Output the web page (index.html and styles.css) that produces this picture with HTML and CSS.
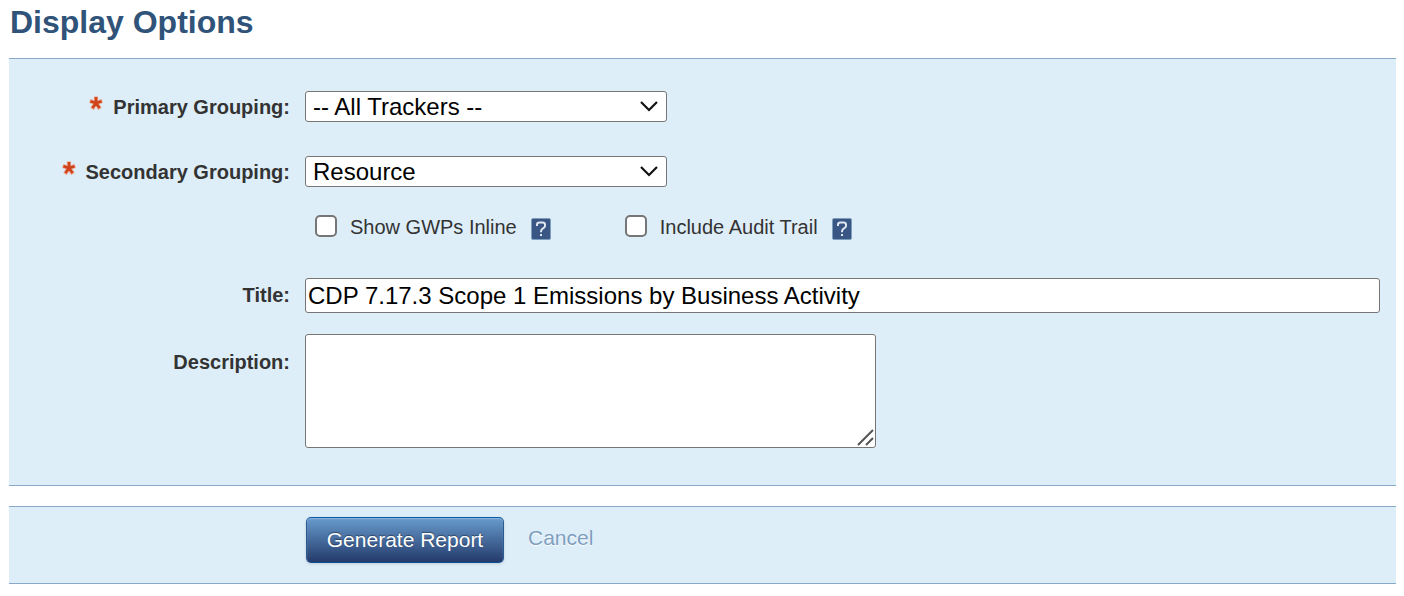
FILE: index.html
```html
<!DOCTYPE html>
<html lang="en">
<head>
    <meta charset="UTF-8">
    <meta name="viewport" content="width=device-width, initial-scale=1.0">
    <title>Display Options</title>
    <link rel="stylesheet" href="styles.css">
</head>
<body>

    <svg width="0" height="0" class="defs">
        <symbol id="star" viewBox="0 0 14 14">
            <path d="M7 7V0.500M7 7L0.800 5M7 7l6.200-2M7 7l-4 6M7 7l4 6" fill="none" stroke="#eba592" stroke-width="4.200"/>
            <path d="M7 7V1M7 7L1.400 5.200M7 7l5.600-1.800M7 7l-3.600 5M7 7l3.600 5" fill="none" stroke="#d0441c" stroke-width="2.600"/>
        </symbol>
        <symbol id="chevron" viewBox="0 0 18 12">
            <path d="M1 2l8 8 8-8" fill="none" stroke="#111" stroke-width="2.200"/>
        </symbol>
        <symbol id="help" viewBox="0 0 20 22">
            <rect x="0.500" y="0.500" width="19" height="21" rx="1.500" fill="#3a5685" stroke="#7d9dbd"/>
            <path d="M6 8V6.500Q6 4.500 8.500 4.500H11.500Q14 4.500 14 6.600V8Q14 9.300 12 10.300Q10 11.500 10 13.500V14.300" fill="none" stroke="#dfe7f1" stroke-width="2"/>
            <rect x="9" y="16" width="2" height="2" fill="#dfe7f1"/>
        </symbol>
    </svg>

    <h1>Display Options</h1>

    <form>
        <div class="panel options">
            <div class="row">
                <label for="primary"><svg class="star"><use href="#star"/></svg>Primary Grouping:</label>
                <div class="select">
                    <select id="primary"><option>-- All Trackers --</option></select>
                    <svg class="chevron"><use href="#chevron"/></svg>
                </div>
            </div>

            <div class="row">
                <label for="secondary"><svg class="star"><use href="#star"/></svg>Secondary Grouping:</label>
                <div class="select">
                    <select id="secondary"><option>Resource</option></select>
                    <svg class="chevron"><use href="#chevron"/></svg>
                </div>
            </div>

            <div class="checks">
                <div class="check">
                    <input type="checkbox" id="gwps">
                    <label for="gwps">Show GWPs Inline</label>
                    <svg class="help"><use href="#help"/></svg>
                </div>
                <div class="check">
                    <input type="checkbox" id="audit">
                    <label for="audit">Include Audit Trail</label>
                    <svg class="help"><use href="#help"/></svg>
                </div>
            </div>

            <div class="row title-row">
                <label for="title">Title:</label>
                <input type="text" id="title" value="CDP 7.17.3 Scope 1 Emissions by Business Activity">
            </div>

            <div class="row description-row">
                <label for="description">Description:</label>
                <div class="description">
                    <textarea id="description"></textarea>
                    <svg class="grip" viewBox="0 0 18 18"><path d="M1 16L16 1M9 16l7-7" fill="none" stroke="#555" stroke-width="2"/></svg>
                </div>
            </div>
        </div>

        <div class="panel actions">
            <button type="button">Generate Report</button>
            <a href="#">Cancel</a>
        </div>
    </form>

</body>
</html>
```
FILE: styles.css
```css
* {
    box-sizing: border-box;
}

body {
    margin: 0 8px 12px 9px;
    font-family: Arial, "Liberation Sans", sans-serif;
    font-size: 20px;
    color: #333;
}

.defs {
    position: absolute;
}

h1 {
    margin: 0;
    padding: 2px 0 16px 1px;
    font-size: 32px;
    line-height: 40px;
    color: #2f5379;
}

.panel {
    background: #deeef8;
    border-top: 1px solid #8aa9c6;
    border-bottom: 1px solid #8aa9c6;
}

.options {
    padding: 32px 16px 37px 0;
    margin-bottom: 20px;
}

.row {
    display: grid;
    grid-template-columns: 281px 1fr;
    column-gap: 15px;
    align-items: center;
    margin-bottom: 34px;
}

.row > label {
    display: flex;
    justify-content: flex-end;
    padding-top: 2px;
    font-weight: bold;
}

.star {
    width: 14px;
    height: 14px;
    margin-right: 10px;
}

.select {
    position: relative;
    max-width: 362px;
}

select,
input[type="text"],
textarea {
    display: block;
    width: 100%;
    border: 1px solid #767676;
    border-radius: 3px;
    background: #fff;
    font-family: inherit;
    font-size: 24px;
    color: #000;
}

select {
    height: 31px;
    padding: 0 7px;
    appearance: none;
}

.chevron {
    position: absolute;
    right: 9px;
    top: 9px;
    width: 18px;
    height: 12px;
    pointer-events: none;
}

.checks {
    display: flex;
    gap: 74px;
    margin: -6px 0 39px 306px;
}

.check {
    display: flex;
    align-items: center;
    height: 24px;
}

.check input {
    appearance: none;
    width: 22px;
    height: 22px;
    margin: 0 13px 2px 0;
    border: 2px solid #767676;
    border-radius: 5px;
    background: #fff;
}

.check label {
    margin-right: 14px;
}

.help {
    width: 20px;
    height: 22px;
    margin-top: 4px;
}

.title-row {
    margin-bottom: 21px;
}

.title-row > label {
    padding-top: 0;
}

input[type="text"] {
    height: 35px;
    padding: 0 2px;
}

.description-row {
    align-items: start;
    margin-bottom: 0;
}

.description-row > label {
    padding-top: 17px;
}

.description {
    position: relative;
    max-width: 571px;
}

textarea {
    height: 114px;
    resize: none;
}

.grip {
    position: absolute;
    right: 1px;
    bottom: 1px;
    width: 18px;
    height: 18px;
}

.actions {
    display: flex;
    align-items: flex-start;
    gap: 24px;
    padding: 10px 0 20px 297px;
}

button {
    width: 198px;
    height: 46px;
    padding: 0;
    border: 1px solid #2a5a94;
    border-top-color: #0d5ba5;
    border-bottom-color: #0d4f93;
    border-radius: 5px;
    background: linear-gradient(#689bcd, #233a6b);
    box-shadow: inset 0 1px 1px #8db8e0, 0 1px 3px rgba(0, 0, 0, 0.15);
    font-family: inherit;
    font-size: 21px;
    color: #fff;
    text-shadow: 0 -1px 1px rgba(0, 0, 0, 0.4);
}

.actions a {
    font-size: 21px;
    line-height: 42px;
    color: #7f9fbf;
    text-decoration: none;
    text-shadow: 0 1px 1px #fff;
}
```
